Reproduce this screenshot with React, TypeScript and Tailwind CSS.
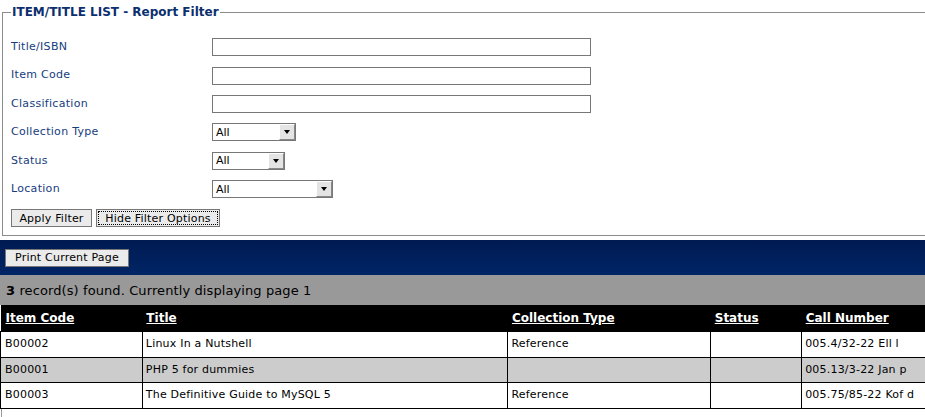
import React from 'react';

const font = { fontFamily: '"DejaVu Sans", Verdana, sans-serif' };

const rows = [
  { code: 'B00002', title: 'Linux In a Nutshell', type: 'Reference', status: '', call: '005.4/32-22 Ell l' },
  { code: 'B00001', title: 'PHP 5 for dummies', type: '', status: '', call: '005.13/3-22 Jan p' },
  { code: 'B00003', title: 'The Definitive Guide to MySQL 5', type: 'Reference', status: '', call: '005.75/85-22 Kof d' },
];

function TextBox() {
  return <input type="text" className="w-[379px] h-[18px] border border-[#777] bg-white outline-none" />;
}

function Select({ width }: { width: string }) {
  return (
    <div className={`${width} h-[18px] border border-[#777] bg-white flex items-center`}>
      <span className="flex-1 pl-[3px] text-[11px] text-black leading-none">All</span>
      <span className="w-[16px] h-[16px] bg-[#e4e4e4] border-l border-t border-white border-r border-b border-r-[#888] border-b-[#888] flex items-center justify-center">
        <span className="w-0 h-0 border-l-[3px] border-r-[3px] border-t-[4px] border-l-transparent border-r-transparent border-t-black" />
      </span>
    </div>
  );
}

function Row({ label, children }: { label: string; children: React.ReactNode }) {
  return (
    <div className="h-[28.4px] flex items-center">
      <label className="w-[201px] text-[11px] tracking-[0.3px] text-[#163d7e]">{label}</label>
      {children}
    </div>
  );
}

export default function App() {
  return (
    <div className="w-screen overflow-hidden bg-white" style={font}>
      <div className="w-[1000px]">
        {/* 검색 필터 */}
        <fieldset className="mx-[2px] mt-[4px] border border-[#8c8c8c] pl-[8px] pr-2 pb-[8px]">
          <legend className="ml-0 px-[1px] text-[12px] font-bold text-[#0c2f6e] leading-[16px]">
            ITEM/TITLE LIST - Report Filter
          </legend>
          <div className="pt-[13px]">
            <Row label="Title/ISBN"><TextBox /></Row>
            <Row label="Item Code"><TextBox /></Row>
            <Row label="Classification"><TextBox /></Row>
            <Row label="Collection Type"><Select width="w-[84px]" /></Row>
            <Row label="Status"><Select width="w-[73px]" /></Row>
            <Row label="Location"><Select width="w-[121px]" /></Row>
          </div>
          <div className="flex gap-[4px] mt-[6px]">
            <button className="h-[18px] w-[81px] border border-[#777] bg-[#ebebeb] text-[11px] tracking-[0.2px] text-black leading-none">
              Apply Filter
            </button>
            <button className="h-[18px] w-[124px] border border-[#777] bg-[#ebebeb] text-[11px] tracking-[0.2px] text-black leading-none p-[1px]">
              <span className="flex items-center justify-center h-full border border-dotted border-black">Hide Filter Options</span>
            </button>
          </div>
        </fieldset>

        {/* 출력 바 */}
        <div className="mt-[4px] h-[35px] bg-gradient-to-b from-[#001a52] to-[#002566] flex items-center pl-[5px]">
          <button className="h-[18px] w-[124px] border border-[#777] bg-[#ebebeb] text-[11px] tracking-[0.2px] text-black leading-none">
            Print Current Page
          </button>
        </div>

        <div className="h-[30px] bg-[#999999] flex items-center pl-[6px] text-[13px] tracking-[0.1px] text-black">
          <b>3</b>&nbsp;record(s) found. Currently displaying page 1
        </div>

        <table className="border-collapse text-[11px] tracking-[0.2px] text-black">
          <thead>
            <tr className="h-[26px] bg-black text-white text-[12px] font-bold text-left">
              <th className="w-[142px] pl-[5px] font-bold underline tracking-normal">Item Code</th>
              <th className="w-[366px] pl-[4px] font-bold underline tracking-normal">Title</th>
              <th className="w-[203px] pl-[4px] font-bold underline tracking-normal">Collection Type</th>
              <th className="w-[91px] pl-[4px] font-bold underline tracking-normal">Status</th>
              <th className="w-[198px] pl-[4px] font-bold underline tracking-normal">Call Number</th>
            </tr>
          </thead>
          <tbody>
            {rows.map((r, i) => (
              <tr key={r.code} className={`h-[25.7px] ${i % 2 === 1 ? 'bg-[#cccccc]' : 'bg-white'}`}>
                <td className="border border-black pl-[4px]">{r.code}</td>
                <td className="border border-black pl-[3px]">{r.title}</td>
                <td className="border border-black pl-[3px]">{r.type}</td>
                <td className="border border-black pl-[3px]">{r.status}</td>
                <td className="border border-black pl-[3px]">{r.call}</td>
              </tr>
            ))}
          </tbody>
        </table>
        <div className="h-[12px] ml-[1px] border-l border-[#999]" />
      </div>
    </div>
  );
}
